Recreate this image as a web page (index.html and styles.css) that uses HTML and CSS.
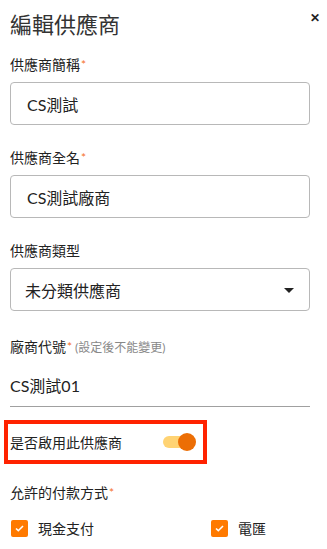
FILE: index.html
```html
<!DOCTYPE html>
<html lang="zh-Hant">
<head>
<meta charset="utf-8">
<link rel="stylesheet" href="styles.css">
</head>
<body>
<div class="dialog">
  <div class="header">
    <h1 class="title">編輯供應商</h1>
    <span class="close">✕</span>
  </div>

  <div class="field">
    <div class="label">供應商簡稱<span class="req">*</span></div>
    <div class="input">CS測試</div>
  </div>

  <div class="field">
    <div class="label">供應商全名<span class="req">*</span></div>
    <div class="input">CS測試廠商</div>
  </div>

  <div class="field">
    <div class="label">供應商類型</div>
    <div class="input select">
      <span>未分類供應商</span>
      <svg class="caret" width="10" height="5" viewBox="0 0 10 5"><path d="M0 0h10L5 5z" fill="#222"/></svg>
    </div>
  </div>

  <div class="field code-field">
    <div class="label">廠商代號<span class="req">*</span><span class="hint">(設定後不能變更)</span></div>
    <div class="plain">CS測試01</div>
  </div>

  <div class="highlight">
    <span class="toggle-label">是否啟用此供應商</span>
    <span class="toggle"><span class="track"></span><span class="thumb"></span></span>
  </div>

  <div class="field pay">
    <div class="label">允許的付款方式<span class="req">*</span></div>
    <div class="checks">
      <label class="check"><span class="box"><svg width="9" height="7" viewBox="0 0 9 7"><path d="M1 3.5l2.3 2.2L8 1" fill="none" stroke="#fff" stroke-width="1.6"/></svg></span>現金支付</label>
      <label class="check"><span class="box"><svg width="9" height="7" viewBox="0 0 9 7"><path d="M1 3.5l2.3 2.2L8 1" fill="none" stroke="#fff" stroke-width="1.6"/></svg></span>電匯</label>
    </div>
  </div>
</div>
</body>
</html>
```
FILE: styles.css
```css
html, body {
  margin: 0;
  padding: 0;
  background: #fff;
}
body {
  font-family: "Lato", "Noto Sans CJK TC", sans-serif;
  color: #222;
  width: 327px;
  height: 549px;
  overflow: hidden;
}
.dialog {
  padding: 0 17px 0 10px;
}
.header {
  display: flex;
  justify-content: space-between;
  align-items: flex-start;
  height: 55px;
}
.title {
  margin: 11px 0 0 0;
  font-size: 22px;
  font-weight: 400;
  color: #333;
  line-height: 28px;
}
.close {
  margin: 10px -10px 0 0;
  font-size: 12px;
  color: #222;
  font-weight: 700;
}
.field {
  margin-bottom: 23px;
}
.label {
  font-size: 14px;
  line-height: 20px;
  color: #222;
  margin-bottom: 7px;
}
.req {
  color: #f5702a;
  font-size: 12px;
  vertical-align: top;
  margin-left: 1px;
}
.hint {
  color: #888;
  font-size: 12px;
  margin-left: 3px;
}
.input {
  box-sizing: border-box;
  height: 43px;
  border: 1px solid #b8b8b8;
  border-radius: 4px;
  padding: 0 16px;
  display: flex;
  align-items: center;
  font-size: 16px;
  color: #222;
}
.select {
  padding: 0 15px 0 14px;
  justify-content: space-between;
}
.caret {
  margin-top: 2px;
}
.code-field {
  margin-bottom: 0;
  margin-top: 26px;
}
.code-field .label {
  margin-bottom: 18px;
}
.plain {
  font-size: 16px;
  line-height: 20px;
  padding-bottom: 10px;
  border-bottom: 1px solid #a0a0a0;
}
.highlight {
  margin: 13px 0 0 -6px;
  width: 186px;
  height: 36px;
  border: 4px solid #ff2200;
  display: flex;
  align-items: center;
  justify-content: space-between;
  padding-left: 2px;
  padding-right: 7px;
}
.toggle-label {
  font-size: 14px;
}
.toggle {
  position: relative;
  width: 33px;
  height: 18px;
  display: inline-block;
}
.track {
  position: absolute;
  left: 0;
  top: 3px;
  width: 28px;
  height: 12px;
  border-radius: 6px;
  background: #ffd373;
}
.thumb {
  position: absolute;
  right: 0;
  top: 0;
  width: 18px;
  height: 18px;
  border-radius: 50%;
  background: #ec6e05;
}
.pay {
  margin-top: 19px;
}
.pay .label {
  margin-bottom: 15px;
}
.checks {
  display: grid;
  grid-template-columns: 200px 1fr;
  padding-left: 1px;
}
.check {
  display: flex;
  align-items: center;
  font-size: 14px;
  gap: 10px;
}
.box {
  width: 17px;
  height: 17px;
  border-radius: 2px;
  background: #ff7a00;
  display: flex;
  align-items: center;
  justify-content: center;
}
```
